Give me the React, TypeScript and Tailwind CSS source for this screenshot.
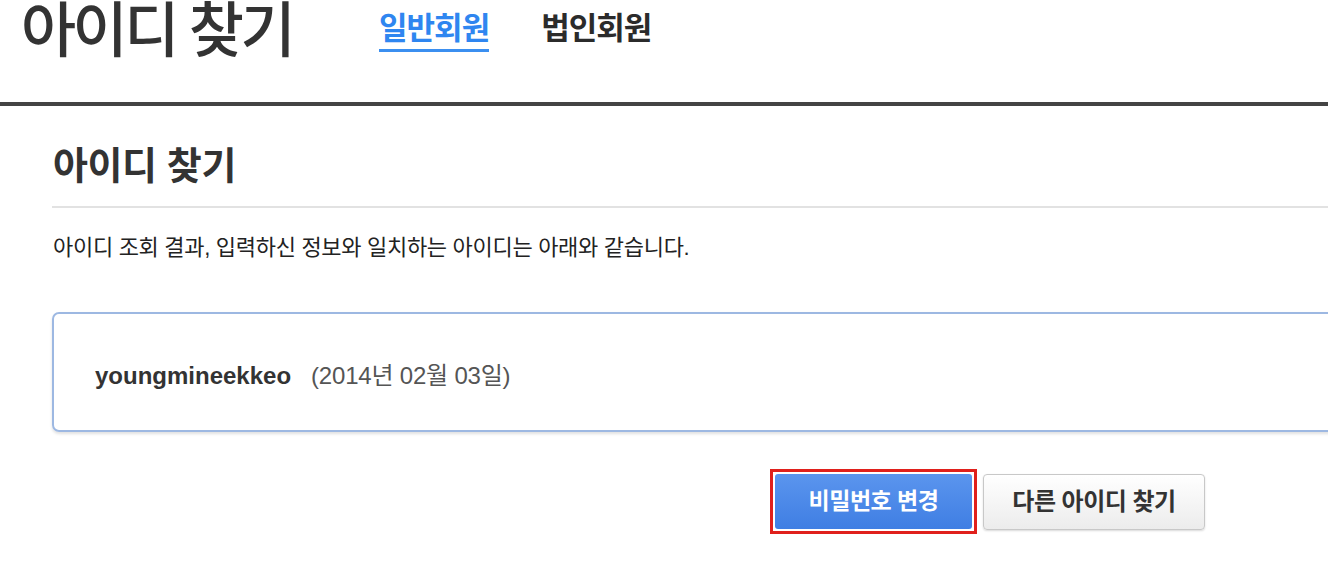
import React from 'react';

const KR = "font-['Liberation_Sans','Noto_Sans_CJK_KR',sans-serif]";

export default function App() {
  return (
    <div className={`w-[1328px] h-[584px] overflow-hidden bg-white ${KR}`}>
      {/* top header */}
      <div className="h-[102px] flex items-start">
        <h1 className="ml-[21px] mt-[4px] text-[60px] leading-[56px] tracking-[-3.6px] font-medium text-[#333]">
          아이디 찾기
        </h1>
        <nav className="ml-[87px] mt-[10px] flex gap-[52px] text-[31px] font-bold tracking-[-1px]">
          <a className="text-[#2f86f0] border-b-[3px] border-[#3b8ff0] pb-[1px] leading-[38px]">일반회원</a>
          <a className="text-[#2b2b2b] leading-[38px]">법인회원</a>
        </nav>
      </div>
      <div className="h-[4px] bg-[#444]" />

      {/* content */}
      <div className="pl-[52px] w-[1400px]">
        <h2 className="mt-[36px] ml-[1px] text-[38px] leading-[48px] font-bold text-[#333] tracking-[-0.4px]">
          아이디 찾기
        </h2>
        <div className="mt-[16px] h-[2px] bg-[#e2e2e2]" />
        <p className="mt-[25px] ml-[1px] text-[22px] leading-[30px] text-[#222] tracking-[-0.3px]">
          아이디 조회 결과, 입력하신 정보와 일치하는 아이디는 아래와 같습니다.
        </p>

        <div className="mt-[49px] h-[120px] border-2 border-[#9db8e2] rounded-[7px] shadow-[0_2px_3px_rgba(0,0,0,0.12)] flex items-center pl-[41px] pt-[8px]">
          <span className="text-[24px] font-bold text-[#333]">youngmineekkeo</span>
          <span className="ml-[20px] text-[24px] text-[#555] tracking-[-0.2px]">(2014년 02월 03일)</span>
        </div>

        <div className="mt-[37px] flex items-center gap-[6px] ml-[718px]">
          <div className="border-[3px] border-[#e0201c] p-[2px] bg-white">
            <button className="w-[197px] h-[55px] rounded-[3px] bg-gradient-to-b from-[#5b95ee] to-[#3f7ee3] text-white text-[23px] font-bold tracking-[-0.5px]">
              비밀번호 변경
            </button>
          </div>
          <button className="w-[222px] h-[56px] rounded-[4px] border border-[#c8c8c8] bg-gradient-to-b from-[#ffffff] to-[#ececec] shadow-[0_1px_2px_rgba(0,0,0,0.15)] text-[#333] text-[24px] font-bold tracking-[-0.5px]">
            다른 아이디 찾기
          </button>
        </div>
      </div>
    </div>
  );
}
